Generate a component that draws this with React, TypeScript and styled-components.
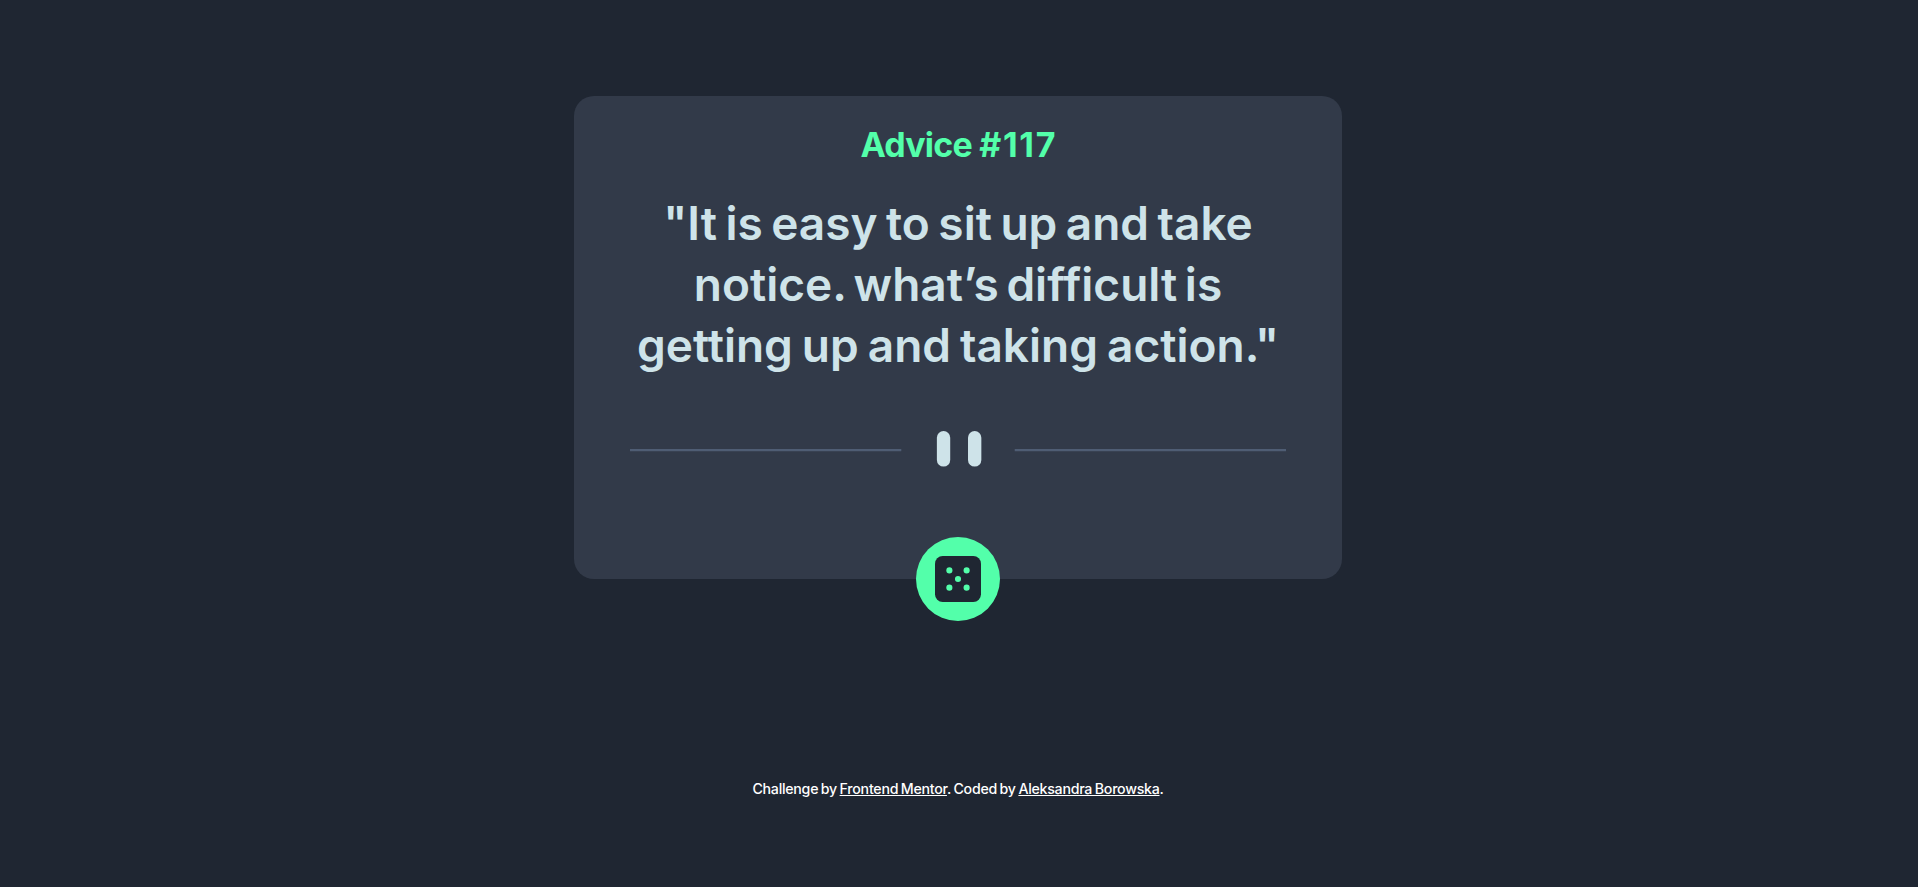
import React from "react";
import styled, { createGlobalStyle } from "styled-components";

const GlobalStyle = createGlobalStyle`
  * { box-sizing: border-box; }
  body {
    margin: 0;
    background: #1f2632;
    font-family: Inter, "Liberation Sans", sans-serif;
  }
`;

const Page = styled.div`
  display: flex;
  flex-direction: column;
  align-items: center;
  width: 1916px;
  height: 887px;
  padding-top: 96px;
`;

const Card = styled.main`
  display: flex;
  flex-direction: column;
  align-items: center;
  flex: none;
  width: 768px;
  height: 483px;
  padding-top: 24px;
  border-radius: 20px;
  background: #323a49;
`;

const Title = styled.h1`
  margin: 0;
  height: 49px;
  line-height: 49px;
  font-size: 34px;
  font-weight: 700;
  letter-spacing: -0.8px;
  color: #53ffaa;
  white-space: nowrap;
`;

const Num = styled.span`
  letter-spacing: 1.7px;
  margin-right: -1.7px;
`;

const Quote = styled.blockquote`
  margin: 24px 0 0;
  font-size: 46px;
  font-weight: 600;
  line-height: 61px;
  color: #cee3e9;
  text-align: center;
`;

const Line = styled.span<{ $gap: number }>`
  display: block;
  white-space: nowrap;
  word-spacing: ${(p) => p.$gap}px;
`;

const Divider = styled.svg`
  display: block;
  flex: none;
  width: 656px;
  height: 36px;
  margin-top: 55px;
`;

const DiceButton = styled.button`
  display: flex;
  align-items: center;
  justify-content: center;
  flex: none;
  width: 84px;
  height: 84px;
  margin-top: 70px;
  padding: 0;
  border: 0;
  border-radius: 50%;
  background: #53ffaa;
  cursor: pointer;
`;

const Footer = styled.footer`
  margin-top: 200px;
  font-size: 14.2px;
  font-weight: 500;
  line-height: 20px;
  letter-spacing: -0.26px;
  word-spacing: -0.9px;
  color: #fff;
  white-space: nowrap;
`;

const Link = styled.a`
  color: inherit;
  text-decoration: underline;
`;

export default function App() {
  return (
    <>
      <GlobalStyle />
      <Page>
        <Card>
          <Title>
            Advice <Num>#117</Num>
          </Title>
          <Quote>
            <Line $gap={-3.1}>"It is easy to sit up and take</Line>
            <Line $gap={-4}>notice. what’s difficult is</Line>
            <Line $gap={-2.6}>getting up and taking action."</Line>
          </Quote>
          <Divider viewBox="0 0 295 16" preserveAspectRatio="xMidYMin meet">
            <path fill="#4f5d74" d="M0 8.09h122v1H0zM173 8.09h122v1H173z" />
            <g fill="#cee3e9">
              <rect x="138" width="6" height="16" rx="3" />
              <rect x="152" width="6" height="16" rx="3" />
            </g>
          </Divider>
          <DiceButton aria-label="New advice">
            <svg width="46" height="46" viewBox="0 0 24 24">
              <rect width="24" height="24" rx="4" fill="#1f2632" />
              <g fill="#53ffaa">
                <circle cx="7.5" cy="7.5" r="1.6" />
                <circle cx="16.5" cy="7.5" r="1.6" />
                <circle cx="12" cy="12" r="1.6" />
                <circle cx="7.5" cy="16.5" r="1.6" />
                <circle cx="16.5" cy="16.5" r="1.6" />
              </g>
            </svg>
          </DiceButton>
        </Card>
        <Footer>
          Challenge by <Link>Frontend Mentor</Link>. Coded by <Link>Aleksandra Borowska</Link>.
        </Footer>
      </Page>
    </>
  );
}
